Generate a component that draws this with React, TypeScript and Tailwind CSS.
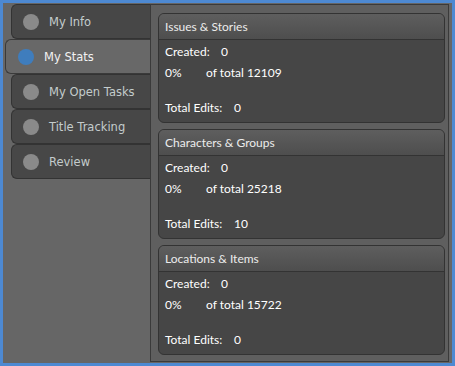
import React from "react";

const tabs = ["My Info", "My Stats", "My Open Tasks", "Title Tracking", "Review"];

const cards = [
  { title: "Issues & Stories", created: 0, total: 12109, edits: 0 },
  { title: "Characters & Groups", created: 0, total: 25218, edits: 10 },
  { title: "Locations & Items", created: 0, total: 15722, edits: 0 },
];

function Tab({ label, active }: { label: string; active: boolean }) {
  if (active) {
    return (
      <div className="flex h-[35px] items-center rounded-l-[6px] border border-r-0 border-[#3a3a3a] bg-[#686868] pl-[12px]">
        <span className="h-[16px] w-[16px] rounded-full bg-[#3f7dbd]" />
        <span className="ml-[10px] pt-[2px] text-[11.5px] text-[#f2f2f2] [font-family:'DejaVu_Sans',sans-serif]">
          {label}
        </span>
      </div>
    );
  }
  return (
    <div className="ml-[6px] flex h-[35px] items-center rounded-l-[6px] border border-r-0 border-[#333] bg-[#474747] pl-[11px]">
      <span className="h-[16px] w-[16px] rounded-full bg-[#8a8a8a]" />
      <span className="ml-[10px] pt-[2px] text-[11.5px] text-[#c4cccc] [font-family:'DejaVu_Sans',sans-serif]">
        {label}
      </span>
    </div>
  );
}

function StatCard({ title, created, total, edits }: (typeof cards)[number]) {
  return (
    <div className="h-[110px] overflow-hidden rounded-[6px] border border-[#333] bg-[#464646] text-[12px] [font-family:Lato,'Open_Sans',sans-serif]">
      <div className="flex h-[26px] items-center border-b border-[#333] bg-gradient-to-b from-[#5e5e5e] to-[#4e4e4e] px-[6px] text-[#ececec]">
        {title}
      </div>
      <div className="px-[6px] pt-[2px] text-white">
        <div className="flex h-[20px] items-center">
          <span className="w-[56px]">Created:</span>
          <span>{created}</span>
        </div>
        <div className="flex h-[21px] items-center">
          <span className="w-[41px]">0%</span>
          <span>of total {total}</span>
        </div>
        <div className="mt-[15px] flex h-[20px] items-center">
          <span className="w-[69px]">Total Edits:</span>
          <span>{edits}</span>
        </div>
      </div>
    </div>
  );
}

export default function App() {
  return (
    <div className="flex h-[366px] w-[455px] border-[3px] border-[#4d89d2] bg-[#666]">
      <div className="flex w-[147px] flex-col pt-[1px] pl-[2px]">
        {tabs.map((t) => (
          <Tab key={t} label={t} active={t === "My Stats"} />
        ))}
      </div>
      <div className="mt-[1px] mb-[1px] mr-[3px] flex flex-1 flex-col gap-[6px] border border-[#3a3a3a] bg-[#5f5f5f] pt-[8px] pr-[3px] pl-[7px]">
        {cards.map((c) => (
          <StatCard key={c.title} {...c} />
        ))}
      </div>
    </div>
  );
}
